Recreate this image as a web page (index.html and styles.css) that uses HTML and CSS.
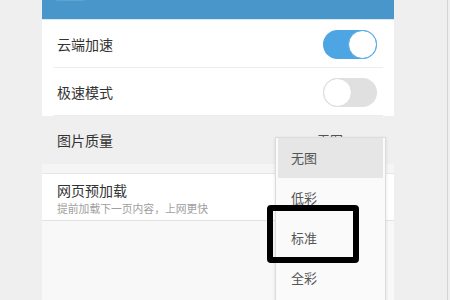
FILE: index.html
```html
<!DOCTYPE html>
<html lang="zh">
<head>
<meta charset="utf-8">
<link rel="stylesheet" href="styles.css">
</head>
<body>
<div class="screen">
  <div class="panel">
    <div class="header"></div>
    <div class="row">
      <span class="label">云端加速</span>
      <span class="toggle on"><span class="knob"></span></span>
    </div>
    <div class="row">
      <span class="label">极速模式</span>
      <span class="toggle off"><span class="knob"></span></span>
    </div>
    <div class="row-pressed">
      <span class="label">图片质量</span>
      <span class="value">无图</span>
    </div>
    <div class="gap"></div>
    <div class="row-sub">
      <div class="title">网页预加载</div>
      <div class="sub">提前加载下一页内容，上网更快</div>
    </div>
    <div class="rest"></div>
  </div>
  <div class="menu">
    <div class="item active">无图</div>
    <div class="item">低彩</div>
    <div class="item">标准</div>
    <div class="item">全彩</div>
  </div>
  <div class="mark"></div>
</div>
</body>
</html>
```

FILE: styles.css
```css
* { box-sizing: border-box; }
html, body {
  margin: 0;
  padding: 0;
  width: 450px;
  height: 300px;
  overflow: hidden;
  background: #efefef;
  font-family: "Noto Sans CJK SC", "Noto Sans", sans-serif;
}
.screen {
  position: relative;
  width: 448px;
  height: 300px;
  border-right: 1px solid #d4d4d4;
  padding-left: 42px;
  display: flex;
}
.panel {
  width: 352px;
  height: 300px;
  display: flex;
  flex-direction: column;
  background: #f8f8f8;
}
.header {
  height: 20px;
  background:
    radial-gradient(ellipse 40px 5px at 28px -2px, rgba(255,255,255,0.12) 60%, transparent 62%),
    radial-gradient(ellipse 50px 4px at 330px -2px, rgba(255,255,255,0.1) 60%, transparent 62%),
    #4997ca;
  border-bottom: 1px solid #d8e8f2;
}
.row {
  background: #fff;
  height: 48px;
  padding: 0 17px 0 15px;
  display: flex;
  align-items: center;
  justify-content: space-between;
  position: relative;
}
.row::after {
  content: "";
  position: absolute;
  left: 12px;
  right: 11px;
  bottom: 0;
  height: 1px;
  background: #ececec;
}
.row:first-of-type { height: 47px; }
.label {
  font-size: 14px;
  color: #333;
  line-height: 18px;
}
.toggle {
  width: 54px;
  height: 29px;
  border-radius: 15px;
  display: flex;
  align-items: center;
}
.toggle.on {
  background: #4ea5e3;
  justify-content: flex-end;
}
.toggle.off {
  background: #e0e0e0;
  justify-content: flex-start;
}
.knob {
  width: 29px;
  height: 29px;
  border-radius: 50%;
  background: #fff;
}
.toggle.on .knob { border: 1.5px solid #4ea5e3; }
.toggle.off .knob { border: 1px solid #dadada; }
.row-pressed {
  height: 48px;
  background: #efefef;
  padding: 0 51px 0 15px;
  display: flex;
  align-items: center;
  justify-content: space-between;
}
.value {
  font-size: 13px;
  color: #555;
  line-height: 18px;
}
.gap {
  height: 10px;
  background: #f5f5f5;
  border-bottom: 1px solid #e6e6e6;
}
.row-sub {
  background: #fff;
  height: 47px;
  padding: 7px 15px 0;
  border-bottom: 1px solid #e2e2e2;
}
.title {
  font-size: 14px;
  line-height: 18px;
  color: #333;
}
.sub {
  margin-top: 2px;
  font-size: 10.8px;
  line-height: 14px;
  color: #a0a0a0;
}
.rest {
  flex: 1;
  background: #f8f8f8;
}
.menu {
  position: absolute;
  left: 275px;
  top: 137px;
  width: 111px;
  height: 175px;
  background: #fafafa;
  border: 1px solid #dcdcdc;
  box-shadow: 0 1px 3px rgba(0,0,0,0.12);
  padding: 0 2px;
}
.item {
  height: 40px;
  line-height: 40px;
  padding-left: 13px;
  font-size: 13px;
  color: #555;
}
.item.active { background: #e6e6e6; }
.mark {
  position: absolute;
  left: 267px;
  top: 205px;
  width: 92px;
  height: 58px;
  border: 6px solid #000;
  border-radius: 4px;
}
```
